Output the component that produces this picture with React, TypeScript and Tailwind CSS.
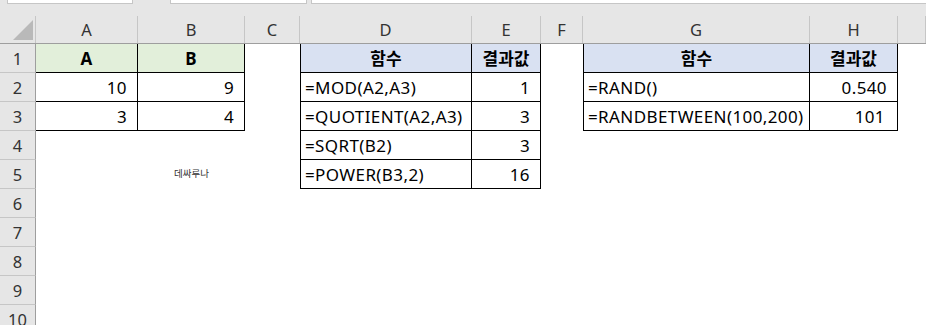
import React from "react";

type CellDef = {
  text?: string;
  align?: "left" | "right" | "center";
  bold?: boolean;
  bg?: string;
  box?: boolean; // black table border (right + bottom)
  boxLeft?: boolean;
  pad?: string;
};

const COL_LETTERS = ["A", "B", "C", "D", "E", "F", "G", "H", ""];

const GREEN = "bg-[#e2efda]";
const BLUE = "bg-[#d9e1f2]";

// sheet contents keyed by row number, one entry per column A..I
const ROWS: Record<number, CellDef[]> = {
  1: [
    { text: "A", align: "center", bold: true, bg: GREEN, box: true },
    { text: "B", align: "center", bold: true, bg: GREEN, box: true },
    {},
    { text: "함수", align: "center", bold: true, bg: BLUE, box: true, boxLeft: true },
    { text: "결과값", align: "center", bold: true, bg: BLUE, box: true },
    {},
    { text: "함수", align: "center", bold: true, bg: BLUE, box: true, boxLeft: true },
    { text: "결과값", align: "center", bold: true, bg: BLUE, box: true },
  ],
  2: [
    { text: "10", align: "right", box: true },
    { text: "9", align: "right", box: true },
    {},
    { text: "=MOD(A2,A3)", box: true, boxLeft: true },
    { text: "1", align: "right", box: true },
    {},
    { text: "=RAND()", box: true, boxLeft: true },
    { text: "0.540", align: "right", box: true, pad: "pr-[7px]" },
  ],
  3: [
    { text: "3", align: "right", box: true },
    { text: "4", align: "right", box: true },
    {},
    { text: "=QUOTIENT(A2,A3)", box: true, boxLeft: true },
    { text: "3", align: "right", box: true },
    {},
    { text: "=RANDBETWEEN(100,200)", box: true, boxLeft: true },
    { text: "101", align: "right", box: true, pad: "pr-[12px]" },
  ],
  4: [
    {},
    {},
    {},
    { text: "=SQRT(B2)", box: true, boxLeft: true },
    { text: "3", align: "right", box: true },
  ],
  5: [
    {},
    {},
    {},
    { text: "=POWER(B3,2)", box: true, boxLeft: true },
    { text: "16", align: "right", box: true },
  ],
};

const GRID =
  "grid grid-cols-[36px_102px_107px_55px_172px_69px_42px_227px_88px_1fr]";

function Cell({ def }: { def: CellDef }) {
  const justify =
    def.align === "right"
      ? "justify-end pr-[10px]"
      : def.align === "center"
        ? "justify-center"
        : "justify-start pl-[4px]";
  return (
    <div
      className={[
        "flex h-[29px] items-center overflow-visible whitespace-nowrap pt-[2px] text-[17px] text-black",
        justify,
        def.pad ?? "",
        def.bg ?? "bg-white",
        def.bold ? "font-bold" : "tracking-[0.4px]",
        def.box ? "border-r border-b border-black" : "",
        def.boxLeft ? "border-l" : "",
      ].join(" ")}
    >
      {def.text}
    </div>
  );
}

export default function App() {
  const rows = Array.from({ length: 10 }, (_, i) => i + 1);

  return (
    <div
      className="h-[325px] w-[926px] overflow-hidden bg-white"
      style={{ fontFamily: '"Noto Sans", "Noto Sans CJK KR", sans-serif' }}
    >
      {/* formula bar remnants */}
      <div className="flex h-4 bg-[#e6e6e6]">
        <div className="ml-[7px] h-1 w-[126px] border-x border-b border-[#c6c6c6] bg-white" />
        <div className="ml-[37px] h-1 w-[137px] border-x border-b border-[#c6c6c6] bg-white" />
        <div className="ml-[4px] h-1 flex-1 border-l border-b border-[#c6c6c6] bg-white" />
      </div>

      {/* column headers */}
      <div className={`${GRID} h-[28px] border-b border-[#9e9e9e] bg-[#e6e6e6]`}>
        <div className="relative border-r border-[#c6c6c6]">
          <svg className="absolute left-0 top-0" width="36" height="28">
            <polygon points="13,24 33,4 33,24" fill="#b9b9b9" />
          </svg>
        </div>
        {COL_LETTERS.map((c, i) => (
          <div
            key={i}
            className="flex items-center justify-center border-r border-[#c6c6c6] pt-[1px] text-[16.5px] text-[#333]"
          >
            {c}
          </div>
        ))}
      </div>

      {/* sheet body */}
      {rows.map((r) => {
        const defs = ROWS[r] ?? [];
        return (
          <div key={r} className={GRID}>
            <div className="flex h-[29px] items-center justify-center border-r border-b border-r-[#9e9e9e] border-b-[#c6c6c6] bg-[#e6e6e6] pt-[2px] text-[16.5px] text-[#333]">
              {r}
            </div>
            {COL_LETTERS.map((_, ci) => {
              if (r === 5 && ci === 1) {
                return (
                  <div
                    key={ci}
                    className="flex h-[29px] items-center justify-center bg-white text-[9.5px] text-[#333]"
                  >
                    데싸루나
                  </div>
                );
              }
              return <Cell key={ci} def={defs[ci] ?? {}} />;
            })}
          </div>
        );
      })}
    </div>
  );
}
